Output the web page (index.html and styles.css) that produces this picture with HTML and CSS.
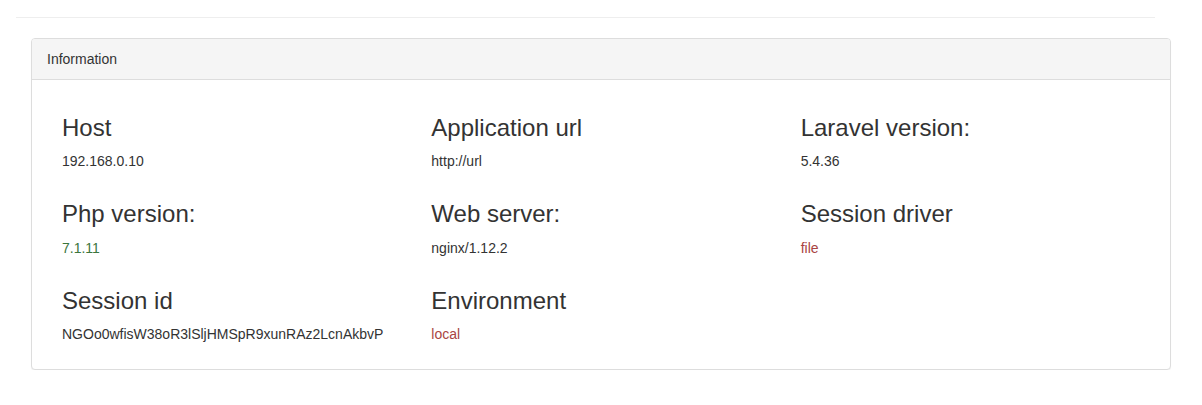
FILE: index.html
```html
<!DOCTYPE html>
<html>
<head>
<meta charset="utf-8">
<link rel="stylesheet" href="styles.css">
</head>
<body>
<div class="page">
  <hr class="sep">
  <div class="panel">
    <div class="panel-heading">Information</div>
    <div class="panel-body">
      <div class="grid">
        <div class="cell"><h3>Host</h3><p>192.168.0.10</p></div>
        <div class="cell"><h3>Application url</h3><p>http://url</p></div>
        <div class="cell"><h3>Laravel version:</h3><p>5.4.36</p></div>
        <div class="cell"><h3>Php version:</h3><p class="success">7.1.11</p></div>
        <div class="cell"><h3>Web server:</h3><p>nginx/1.12.2</p></div>
        <div class="cell"><h3>Session driver</h3><p class="danger">file</p></div>
        <div class="cell"><h3>Session id</h3><p>NGOo0wfisW38oR3lSljHMSpR9xunRAz2LcnAkbvP</p></div>
        <div class="cell"><h3>Environment</h3><p class="danger">local</p></div>
      </div>
    </div>
  </div>
</div>
</body>
</html>
```

FILE: styles.css
```css
* { box-sizing: border-box; }
html, body { margin: 0; padding: 0; background: #fff; }
body {
  font-family: "Liberation Sans", Arial, Helvetica, sans-serif;
  font-size: 14px;
  line-height: 20px;
  color: #333;
}
.page {
  width: 1202px;
  padding: 17px 0 0 0;
}
.sep {
  margin: 0 0 20px 16px;
  width: 1139px;
  height: 0;
  border: 0;
  border-top: 1px solid #eee;
}
.panel {
  margin-left: 31px;
  width: 1140px;
  border: 1px solid #ddd;
  border-radius: 4px;
  box-shadow: 0 1px 1px rgba(0,0,0,0.05);
  background: #fff;
}
.panel-heading {
  background: #f5f5f5;
  border-bottom: 1px solid #ddd;
  border-radius: 3px 3px 0 0;
  padding: 10px 15px;
  color: #333;
}
.panel-body {
  padding: 15px;
}
.grid {
  display: grid;
  grid-template-columns: repeat(3, 1fr);
}
.cell {
  padding: 0 15px;
}
.cell h3 {
  font-size: 24px;
  font-weight: 500;
  line-height: 1.1;
  margin: 20px 0 10px;
  color: #333;
}
.cell p {
  margin: 0 0 10px;
}
.success { color: #3c763d; }
.danger { color: #a94442; }
```
